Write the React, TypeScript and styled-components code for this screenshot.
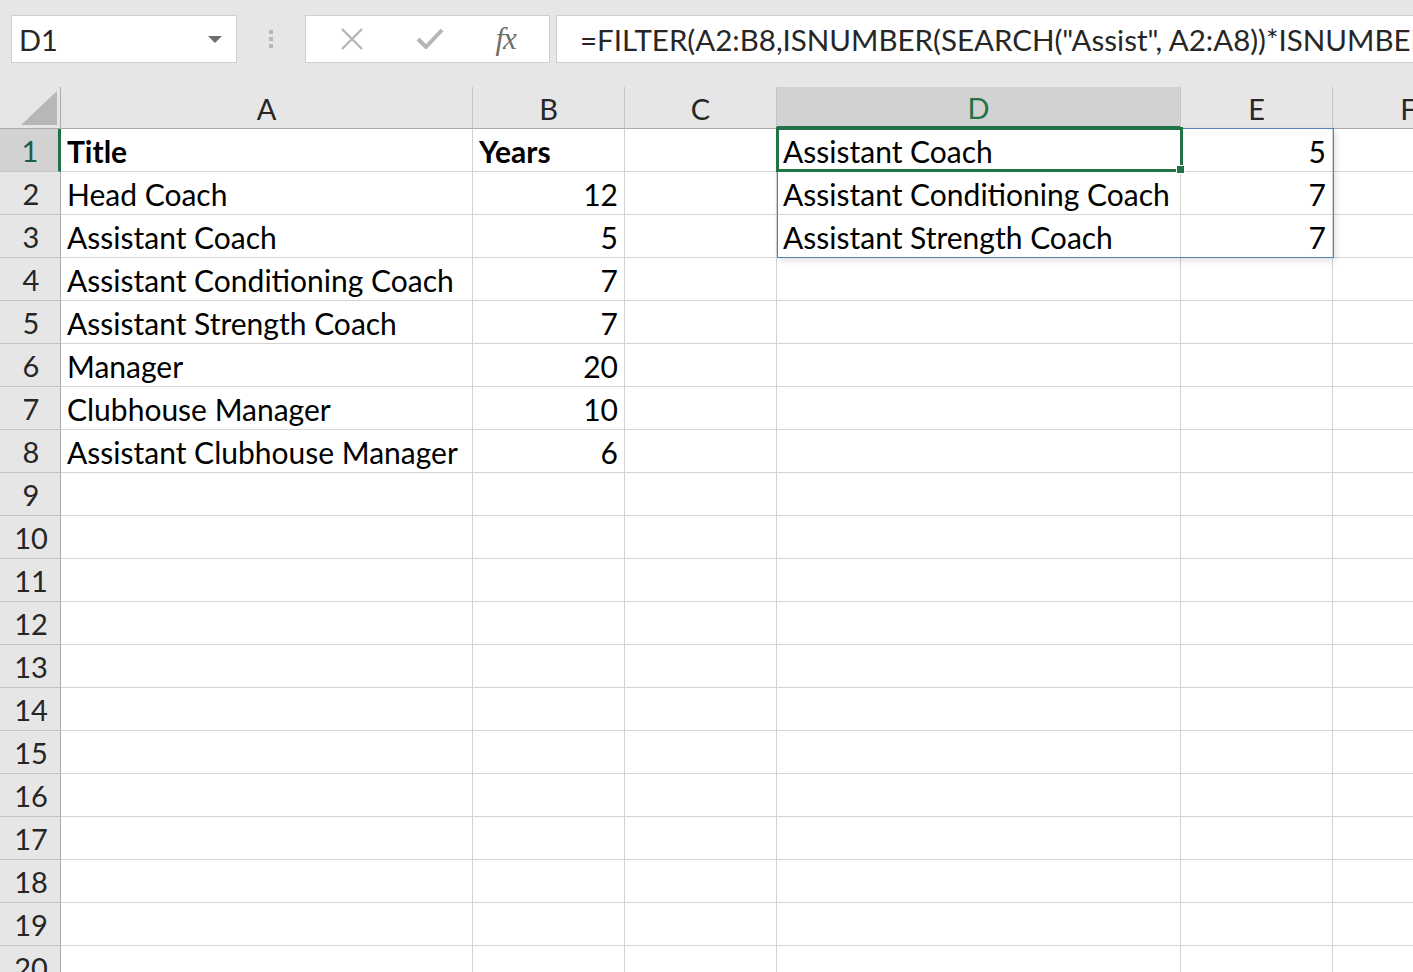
import React from 'react';
import styled, { createGlobalStyle } from 'styled-components';

const GlobalStyle = createGlobalStyle`
  html, body {
    margin: 0;
    padding: 0;
    background: #ffffff;
    overflow: hidden;
  }
  body {
    font-family: Lato, "Open Sans", "Liberation Sans", sans-serif;
  }
`;

const COLS = [
  { key: 'A', width: 412 },
  { key: 'B', width: 152 },
  { key: 'C', width: 152 },
  { key: 'D', width: 404 },
  { key: 'E', width: 152 },
  { key: 'F', width: 152 },
];
const ROW_HEAD = 61;
const HEAD_H = 42;
const ROW_H = 43;
const ROW_COUNT = 20;

type CellValue = { text: string; align?: 'left' | 'right'; bold?: boolean };

const data: Record<string, CellValue> = {
  A1: { text: 'Title', bold: true },
  B1: { text: 'Years', bold: true },
  A2: { text: 'Head Coach' },
  B2: { text: '12', align: 'right' },
  A3: { text: 'Assistant Coach' },
  B3: { text: '5', align: 'right' },
  A4: { text: 'Assistant Conditioning Coach' },
  B4: { text: '7', align: 'right' },
  A5: { text: 'Assistant Strength Coach' },
  B5: { text: '7', align: 'right' },
  A6: { text: 'Manager' },
  B6: { text: '20', align: 'right' },
  A7: { text: 'Clubhouse Manager' },
  B7: { text: '10', align: 'right' },
  A8: { text: 'Assistant Clubhouse Manager' },
  B8: { text: '6', align: 'right' },
  D1: { text: 'Assistant Coach' },
  E1: { text: '5', align: 'right' },
  D2: { text: 'Assistant Conditioning Coach' },
  E2: { text: '7', align: 'right' },
  D3: { text: 'Assistant Strength Coach' },
  E3: { text: '7', align: 'right' },
};

const Page = styled.div`
  width: 100vw;
  height: 100vh;
  overflow: hidden;
  display: flex;
  flex-direction: column;
  background: #ffffff;
`;

const Toolbar = styled.div`
  flex: 0 0 87px;
  display: flex;
  align-items: flex-start;
  padding: 15px 0 0 11px;
  box-sizing: border-box;
  background: #e6e6e6;
`;

const NameBox = styled.div`
  width: 226px;
  height: 48px;
  box-sizing: border-box;
  display: flex;
  align-items: center;
  justify-content: space-between;
  padding: 0 14px 0 7px;
  background: #ffffff;
  border: 1px solid #cfcfcf;
  font-size: 29px;
  color: #262626;
`;

const Caret = styled.span`
  width: 0;
  height: 0;
  border-left: 7px solid transparent;
  border-right: 7px solid transparent;
  border-top: 7px solid #6f6f6f;
`;

const Grip = styled.div`
  width: 68px;
  height: 48px;
  display: flex;
  flex-direction: column;
  align-items: center;
  justify-content: center;
  gap: 3px;
  span {
    width: 4px;
    height: 4px;
    background: #b8b8b8;
  }
`;

const FormulaButtons = styled.div`
  width: 245px;
  height: 48px;
  box-sizing: border-box;
  display: flex;
  align-items: center;
  justify-content: space-around;
  padding: 0 8px;
  background: #ffffff;
  border: 1px solid #cfcfcf;
`;

const Fx = styled.span`
  font-family: "Liberation Serif", "DejaVu Serif", serif;
  font-style: italic;
  font-size: 31px;
  color: #6e6e6e;
  letter-spacing: -1px;
`;

const FormulaInput = styled.div`
  flex: 1;
  height: 48px;
  margin-left: 6px;
  box-sizing: border-box;
  display: flex;
  align-items: center;
  padding-left: 23px;
  background: #ffffff;
  border: 1px solid #cfcfcf;
  border-right: none;
  font-size: 29.5px;
  color: #262626;
  white-space: nowrap;
  overflow: hidden;
`;

const SheetArea = styled.div`
  position: relative;
  flex: 1;
`;

const Grid = styled.div`
  display: grid;
  grid-template-columns: ${ROW_HEAD}px ${COLS.map((c) => `${c.width}px`).join(' ')};
  grid-template-rows: ${HEAD_H}px repeat(${ROW_COUNT}, ${ROW_H}px);
`;

const Corner = styled.div`
  position: relative;
  background: #e6e6e6;
  border-right: 1px solid #ababab;
  border-bottom: 1px solid #ababab;
  box-sizing: border-box;
  svg {
    position: absolute;
    right: 3px;
    bottom: 3px;
  }
`;

const ColHead = styled.div<{ $selected?: boolean }>`
  display: flex;
  align-items: center;
  justify-content: center;
  box-sizing: border-box;
  padding-top: 2px;
  background: ${({ $selected }) => ($selected ? '#d2d2d2' : '#e6e6e6')};
  border-right: 1px solid #c4c4c4;
  border-bottom: ${({ $selected }) => ($selected ? '3px solid #217346' : '1px solid #ababab')};
  font-size: 29px;
  color: ${({ $selected }) => ($selected ? '#217346' : '#262626')};
`;

const RowHead = styled.div<{ $selected?: boolean }>`
  display: flex;
  align-items: center;
  justify-content: center;
  box-sizing: border-box;
  padding-left: 2px;
  background: ${({ $selected }) => ($selected ? '#d2d2d2' : '#e6e6e6')};
  border-right: ${({ $selected }) => ($selected ? '3px solid #217346' : '1px solid #ababab')};
  border-bottom: 1px solid #c4c4c4;
  font-size: 29px;
  color: ${({ $selected }) => ($selected ? '#1e5d48' : '#262626')};
`;

const Cell = styled.div<{ $align?: 'left' | 'right'; $bold?: boolean }>`
  display: flex;
  align-items: center;
  justify-content: ${({ $align }) => ($align === 'right' ? 'flex-end' : 'flex-start')};
  box-sizing: border-box;
  padding: 2px 6px 0 6px;
  border-right: 1px solid #d4d4d4;
  border-bottom: 1px solid #d4d4d4;
  font-size: 30px;
  font-weight: ${({ $bold }) => ($bold ? 700 : 400)};
  color: #000000;
  white-space: nowrap;
  overflow: visible;
`;

const SpillRange = styled.div`
  position: absolute;
  box-sizing: border-box;
  border: 1px solid #5a7fb4;
  box-shadow: 2px 3px 6px rgba(0, 0, 0, 0.12);
  pointer-events: none;
`;

const ActiveCell = styled.div`
  position: absolute;
  box-sizing: border-box;
  border: 3px solid #217346;
  pointer-events: none;
`;

const FillHandle = styled.div`
  position: absolute;
  right: -5px;
  bottom: -5px;
  width: 7px;
  height: 7px;
  background: #217346;
  border: 1px solid #ffffff;
`;

function colLeft(index: number) {
  return ROW_HEAD + COLS.slice(0, index).reduce((sum, c) => sum + c.width, 0);
}

function App() {
  const rows = Array.from({ length: ROW_COUNT }, (_, i) => i + 1);
  const dIndex = 3;
  const spillLeft = colLeft(dIndex);
  const spillWidth = COLS[3].width + COLS[4].width;

  return (
    <Page>
      <GlobalStyle />
      <Toolbar>
        <NameBox>
          D1
          <Caret />
        </NameBox>
        <Grip>
          <span />
          <span />
          <span />
        </Grip>
        <FormulaButtons>
          <svg width="26" height="26" viewBox="0 0 26 26">
            <path d="M3 3 L23 23 M23 3 L3 23" stroke="#b5b5b5" strokeWidth="2.4" fill="none" />
          </svg>
          <svg width="30" height="26" viewBox="0 0 30 26">
            <path d="M3 13 L11 21 L27 4" stroke="#b5b5b5" strokeWidth="4" fill="none" strokeLinejoin="round" />
          </svg>
          <Fx>fx</Fx>
        </FormulaButtons>
        <FormulaInput>
          =FILTER(A2:B8,ISNUMBER(SEARCH("Assist", A2:A8))*ISNUMBER(SEARCH("Coach", A2:A8)))
        </FormulaInput>
      </Toolbar>
      <SheetArea>
        <Grid>
          <Corner>
            <svg width="36" height="34" viewBox="0 0 36 34">
              <polygon points="36,0 36,34 0,34" fill="#b7b7b7" />
            </svg>
          </Corner>
          {COLS.map((c) => (
            <ColHead key={c.key} $selected={c.key === 'D'}>
              {c.key}
            </ColHead>
          ))}
          {rows.map((r) => (
            <React.Fragment key={r}>
              <RowHead $selected={r === 1}>{r}</RowHead>
              {COLS.map((c) => {
                const v = data[`${c.key}${r}`];
                return (
                  <Cell key={c.key} $align={v?.align} $bold={v?.bold}>
                    {v?.text}
                  </Cell>
                );
              })}
            </React.Fragment>
          ))}
        </Grid>
        <SpillRange
          style={{ left: spillLeft, top: HEAD_H - 1, width: spillWidth + 1, height: ROW_H * 3 + 1 }}
        />
        <ActiveCell
          style={{ left: spillLeft - 1, top: HEAD_H - 2, width: COLS[3].width + 3, height: ROW_H + 2 }}
        >
          <FillHandle />
        </ActiveCell>
      </SheetArea>
    </Page>
  );
}

export default App;
